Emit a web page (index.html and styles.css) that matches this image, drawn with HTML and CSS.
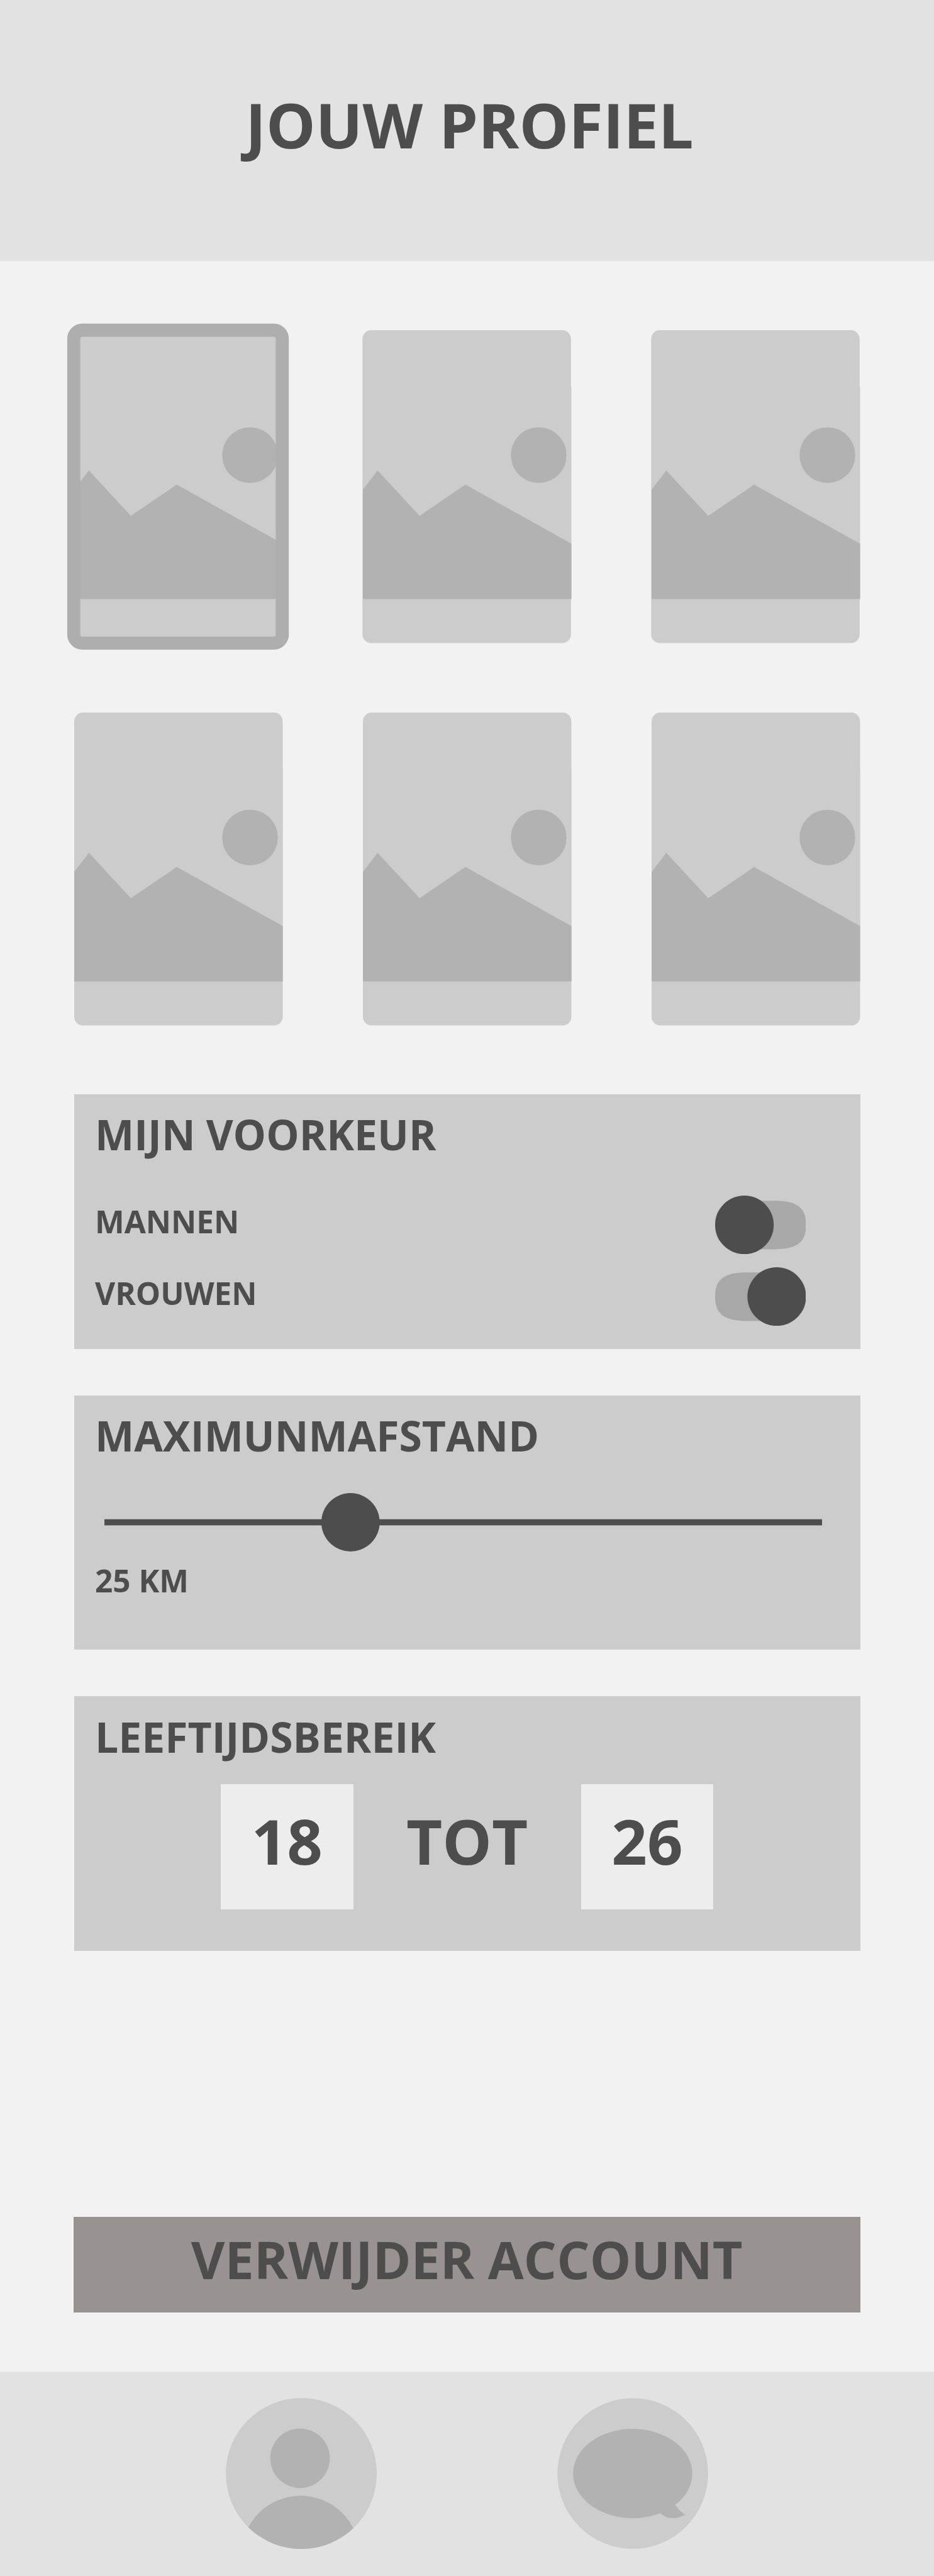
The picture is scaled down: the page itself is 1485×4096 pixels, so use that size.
FILE: index.html
```html
<!DOCTYPE html>
<html lang="nl">
<head>
<meta charset="utf-8">
<title>Jouw profiel</title>
<link rel="stylesheet" href="styles.css">
</head>
<body>
<svg class="defs" width="0" height="0" aria-hidden="true">
  <defs>
    <g id="landscape">
      <rect y="135.5" width="502.5" height="512.5" fill="#cccccc"/>
      <path d="M0 384.2 35.4 338.1 136.6 447.5 247.1 372.1 502.5 514.7V648H0Z" fill="#b2b2b2"/>
      <circle cx="423.7" cy="301.1" r="67.1" fill="#b2b2b2"/>
    </g>
    <symbol id="photo" viewBox="0 0 502.5 754.2" overflow="visible">
      <rect width="502.5" height="754.2" rx="21" fill="#cccccc"/>
      <use href="#landscape"/>
    </symbol>
    <symbol id="photo-top" viewBox="0 0 502.5 754.2" overflow="visible">
      <rect x="-1.1" width="502.5" height="754.2" rx="21" fill="#cccccc"/>
      <use href="#landscape"/>
    </symbol>
  </defs>
</svg>

<header class="header"><h1 class="title">JOUW PROFIEL</h1></header>

<main class="main">
  <section class="photos">
    <svg class="photo"><use href="#photo-top"/><rect class="selection" x="-0.7" y="0" width="331.5" height="497.7" rx="13.5"/></svg>
    <svg class="photo"><use href="#photo-top"/></svg>
    <svg class="photo"><use href="#photo-top"/></svg>
    <svg class="photo"><use href="#photo"/></svg>
    <svg class="photo"><use href="#photo"/></svg>
    <svg class="photo"><use href="#photo"/></svg>
  </section>

  <section class="panel">
    <h2 class="heading">MIJN VOORKEUR</h2>
    <div class="options">
      <div class="option">
        <span class="label">MANNEN</span>
        <svg class="toggle" viewBox="0 0 219 141.4">
          <path d="M75.3 12.5H143.7C206 12.5 219 36.7 219 70.9S206 129.4 143.7 129.4H75.3C13 129.4 0 105.2 0 70.9S13 12.5 75.3 12.5Z" fill="#a8a8a8"/>
          <circle cx="70.6" cy="70.7" r="70.6" fill="#4d4d4d"/>
        </svg>
      </div>
      <div class="option">
        <span class="label">VROUWEN</span>
        <svg class="toggle" viewBox="0 0 219 141.4">
          <path d="M75.3 12.5H143.7C206 12.5 219 36.7 219 70.9S206 129.4 143.7 129.4H75.3C13 129.4 0 105.2 0 70.9S13 12.5 75.3 12.5Z" fill="#a8a8a8"/>
          <circle cx="148.4" cy="70.7" r="70.6" fill="#4d4d4d"/>
        </svg>
      </div>
    </div>
  </section>

  <section class="panel">
    <h2 class="heading">MAXIMUNMAFSTAND</h2>
    <svg class="slider" viewBox="0 0 1141.4 93">
      <rect y="41.7" width="1141.4" height="9.7" fill="#4d4d4d"/>
      <circle cx="391.3" cy="46.5" r="46.4" fill="#4d4d4d"/>
    </svg>
    <span class="label distance">25 KM</span>
  </section>

  <section class="panel">
    <h2 class="heading">LEEFTIJDSBEREIK</h2>
    <div class="range">
      <span class="age">18</span>
      <span class="to">TOT</span>
      <span class="age">26</span>
    </div>
  </section>

  <button class="delete" type="button">VERWIJDER ACCOUNT</button>
</main>

<nav class="nav">
  <svg class="nav-icon" viewBox="0 0 364 364">
    <clipPath id="avatar"><circle cx="182" cy="182" r="182"/></clipPath>
    <circle cx="182" cy="182" r="182" fill="#cccccc"/>
    <g clip-path="url(#avatar)" fill="#b2b2b2">
      <circle cx="178.9" cy="145.2" r="71.8"/>
      <circle cx="180.3" cy="377.5" r="142"/>
    </g>
  </svg>
  <svg class="nav-icon" viewBox="0 0 364 364">
    <circle cx="182" cy="182" r="181.6" fill="#cccccc"/>
    <ellipse cx="181.8" cy="182" rx="143.7" ry="107.7" fill="#b2b2b2"/>
    <path d="M284.3 257.3Q293 271.500 308 281.500Q287 292.500 267 288.500Q259.500 286 247.300 277.300L240 240Z" fill="#b2b2b2"/>
  </svg>
</nav>
</body>
</html>
```
FILE: styles.css
```css
* { box-sizing: border-box; }

body {
  margin: 0;
  width: 1485px;
  height: 4096px;
  display: flex;
  flex-direction: column;
  overflow: hidden;
  background: #f2f2f2;
  color: #4d4d4d;
  font-family: "Open Sans", sans-serif;
  font-weight: 700;
  line-height: 1;
}

h1, h2 { margin: 0; font-weight: 700; }

.defs { position: absolute; }

.header {
  height: 415px;
  padding: 148px 0 0 8px;
  background: #e2e2e2;
  text-align: center;
}

.title { font-size: 99px; }

.main {
  height: 3356.3px;
  padding: 110.2px 117.5px 0 118px;
  display: flex;
  flex-direction: column;
}

.photos {
  display: grid;
  grid-template-columns: repeat(3, 331.5px);
  gap: 110px 127.6px;
  margin: 0 0 109.6px 0.2px;
}

.photo {
  display: block;
  width: 331.5px;
  height: 497.7px;
  overflow: visible;
}

.selection {
  fill: none;
  stroke: #aeaeae;
  stroke-width: 20.8px;
}

.panel {
  height: 404.4px;
  margin-bottom: 74.2px;
  padding: 30.2px 86.3px 0 33px;
  background: #cccccc;
}

.heading { font-size: 66px; }

.options {
  display: grid;
  gap: 20.8px;
  margin-top: 64.3px;
}

.option {
  display: flex;
  justify-content: space-between;
  align-items: center;
}

.option .label { padding-bottom: 9.8px; }

.label { font-size: 49.5px; }

.toggle {
  display: block;
  width: 144.5px;
  height: 93.3px;
}

.slider {
  display: block;
  width: 1141.4px;
  height: 93px;
  margin: 59.2px 0 21.5px 14.9px;
}

.distance { display: block; }

.range {
  display: flex;
  justify-content: center;
  margin: 43.5px -53.1px 0 0;
  font-size: 99px;
  text-align: center;
}

.age {
  width: 210.4px;
  height: 198.8px;
  padding-top: 39.8px;
  background: #ededed;
}

.to {
  width: 362.2px;
  padding-top: 39.8px;
}

.delete {
  height: 151.5px;
  margin: 349.5px 0 0 -1px;
  padding: 26px 0 0;
  border: 0;
  background: #999292;
  color: inherit;
  font: inherit;
  font-size: 82.5px;
  display: flex;
  justify-content: center;
}

.nav {
  flex: 1;
  display: flex;
  justify-content: center;
  gap: 286.6px;
  padding: 41.8px 0 0 0;
  background: #e2e2e2;
}

.nav-icon {
  display: block;
  width: 240.1px;
  height: 240.1px;
}
```
